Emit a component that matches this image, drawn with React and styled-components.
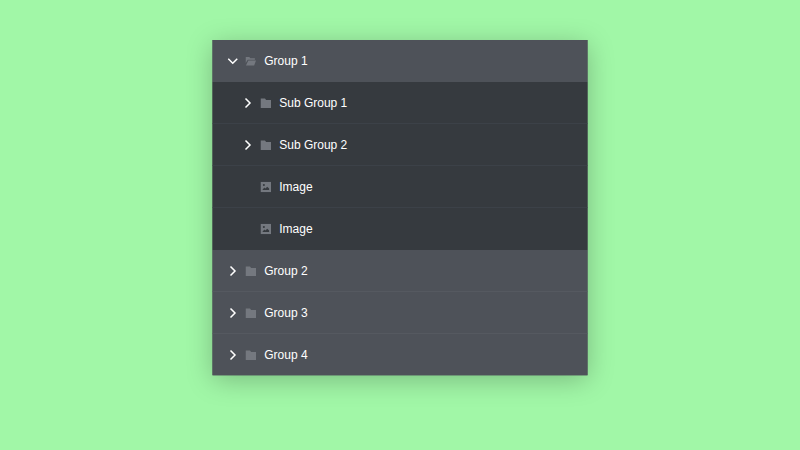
import React from 'react';
import styled, { createGlobalStyle } from 'styled-components';

const GlobalStyle = createGlobalStyle`
  html, body {
    margin: 0;
    padding: 0;
    height: 100%;
  }
  body {
    background: #a1f7a7;
    font-family: 'Liberation Sans', Arial, sans-serif;
  }
`;

const Page = styled.div`
  width: 800px;
  height: 450px;
  display: flex;
  justify-content: center;
  align-items: flex-start;
  padding-top: 40px;
  box-sizing: border-box;
  overflow: hidden;
`;

// drawn at 4/3 size and scaled down, the text stays soft and unhinted
const Tree = styled.ul`
  list-style: none;
  margin: 0;
  padding: 0;
  flex: none;
  width: 500px;
  background: #4e5259;
  box-shadow: 0 6px 34px rgba(0, 0, 0, 0.25);
  transform: scale(0.75);
  transform-origin: top center;
`;

const Row = styled.li`
  height: 56px;
  box-sizing: border-box;
  display: flex;
  align-items: center;
  padding-left: ${(p) => (p.$nested ? 40 : 20)}px;
  background: ${(p) => (p.$nested ? '#363a3f' : '#4e5259')};
  border-bottom: ${(p) => (p.$last ? 'none' : `1px solid ${p.$nested ? '#3f444c' : '#585c63'}`)};
  color: #fff;
  font-size: 16px;

  &:last-child {
    height: 55px;
  }
`;

const Arrow = styled.svg`
  width: 14px;
  height: 14px;
  margin-right: 10px;
  flex: none;
  fill: none;
  stroke: #fff;
  stroke-width: 2;
`;

const Spacer = styled.span`
  width: 14px;
  margin-right: 10px;
  flex: none;
`;

const Glyph = styled.svg`
  width: 14px;
  height: 14px;
  margin-right: 11px;
  flex: none;
  fill: #74787f;
`;

const Label = styled.span`
  line-height: 1;
`;

const Chevron = ({ open }) => (
  <Arrow viewBox="0 0 14 14">
    <path d={open ? 'M1 4 L7 10 L13 4' : 'M4 1 L10 7 L4 13'} />
  </Arrow>
);

const FolderIcon = ({ open }) => (
  <Glyph viewBox="0 0 14 14">
    {open ? (
      <path d="M0 1.5 H5 L6.5 3.2 H12.5 V5.2 H3 L0 10 Z M3.8 6.2 H14 L11.5 13 H0.6 Z" />
    ) : (
      <path d="M0 1 H6 L7.5 3 H14 V13.5 H0 Z" />
    )}
  </Glyph>
);

const ImageIcon = () => (
  <Glyph viewBox="0 0 14 14">
    <path
      fillRule="evenodd"
      d="M0 0 H14 V14 H0 Z M2.5 11 H11.5 V9 L9 6.5 L6.5 9 L5 7.5 Z M4.5 3 A1.4 1.4 0 1 0 4.5 5.8 A1.4 1.4 0 1 0 4.5 3 Z"
    />
  </Glyph>
);

const rows = [
  { label: 'Group 1', type: 'folder', open: true, last: true },
  { label: 'Sub Group 1', type: 'folder', nested: true },
  { label: 'Sub Group 2', type: 'folder', nested: true },
  { label: 'Image', type: 'image', nested: true },
  { label: 'Image', type: 'image', nested: true, last: true },
  { label: 'Group 2', type: 'folder' },
  { label: 'Group 3', type: 'folder' },
  { label: 'Group 4', type: 'folder', last: true },
];

const App = () => (
  <>
    <GlobalStyle />
    <Page>
      <Tree>
        {rows.map((row, i) => (
          <Row key={i} $nested={row.nested} $last={row.last}>
            {row.type === 'folder' ? <Chevron open={row.open} /> : <Spacer />}
            {row.type === 'folder' ? <FolderIcon open={row.open} /> : <ImageIcon />}
            <Label>{row.label}</Label>
          </Row>
        ))}
      </Tree>
    </Page>
  </>
);

export default App;
